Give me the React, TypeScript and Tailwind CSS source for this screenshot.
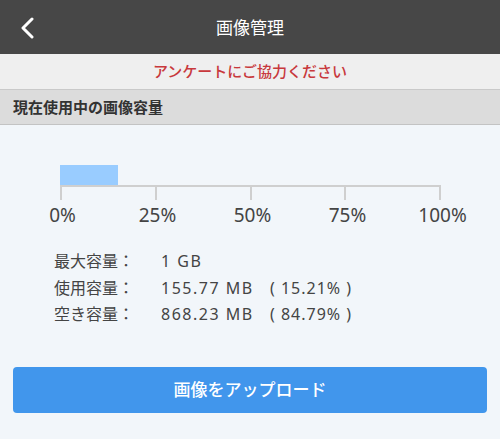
import React from "react";

const font = { fontFamily: '"Noto Sans", "Noto Sans CJK JP", sans-serif' };

export default function App() {
  const ticks = ["0%", "25%", "50%", "75%", "100%"];
  const rows = [
    { label: "最大容量：", value: "1 GB", pct: "" },
    { label: "使用容量：", value: "155.77 MB", pct: "( 15.21% )" },
    { label: "空き容量：", value: "868.23 MB", pct: "( 84.79% )" },
  ];

  return (
    <div className="w-[500px] h-[439px] bg-[#f2f6fa] flex flex-col overflow-hidden" style={font}>
      {/* Header */}
      <div className="h-[54px] bg-[#474747] flex items-center relative shrink-0">
        <div className="absolute left-[20px] top-[17px]">
          <svg width="16" height="22" viewBox="0 0 16 22" fill="none">
            <path d="M12 2 L3 11 L12 20" stroke="white" strokeWidth="3" strokeLinecap="round" strokeLinejoin="round" />
          </svg>
        </div>
        <div className="flex-1 text-center text-white text-[17px] pt-[2px]">画像管理</div>
      </div>

      {/* Survey banner */}
      <div className="h-[36px] bg-[#efefef] border-b border-[#c9c9c9] flex items-center justify-center shrink-0">
        <span className="text-[#c8383c] text-[15px] font-medium">アンケートにご協力ください</span>
      </div>

      {/* Section title */}
      <div className="h-[35px] bg-[#dcdcdc] border-b border-[#c3c3c3] flex items-center px-[13px] shrink-0">
        <span className="text-[#333] text-[15px] font-bold">現在使用中の画像容量</span>
      </div>

      {/* Chart */}
      <div className="pt-[40px] pl-[60px]">
        <div className="w-[381px]">
          <div className="h-[20px] w-[58px] bg-[#99ccff]" />
          <div className="h-[2px] bg-[#cfcfcf]" />
          <div className="h-[13px] flex justify-between">
            {ticks.map((t) => (
              <div key={t} className="w-[2px] bg-[#cfcfcf]" />
            ))}
          </div>
        </div>
      </div>
      <div className="ml-[15px] w-[475px] grid grid-cols-5 text-center text-[19px] leading-none text-[#444] mt-[6px]">
        {ticks.map((t) => (
          <span key={t}>{t}</span>
        ))}
      </div>

      {/* Info */}
      <div className="mt-[26px] pl-[54px] flex flex-col gap-[6px] text-[16px] leading-[20.5px] text-[#444]">
        {rows.map((r) => (
          <div key={r.label} className="flex">
            <span className="w-[107px]">{r.label}</span>
            <span className="w-[109px] tracking-[1.5px]">{r.value}</span>
            <span className="tracking-[1px]">{r.pct}</span>
          </div>
        ))}
      </div>

      {/* Upload button */}
      <div className="px-[13px] mt-[42px]">
        <button className="w-full h-[46px] rounded-[4px] bg-[#4196ec] text-white text-[17px] font-medium flex items-center justify-center">
          画像をアップロード
        </button>
      </div>
    </div>
  );
}
